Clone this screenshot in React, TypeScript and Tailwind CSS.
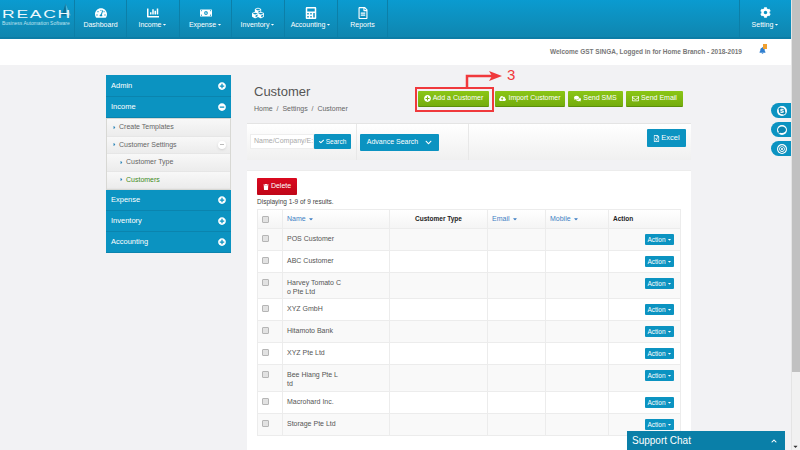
import { Fragment } from "react";
import {
  FaTachometerAlt, FaChartBar, FaMoneyBillAlt, FaCubes, FaCalculator, FaRegFileAlt, FaCog, FaBell,
  FaPlusCircle, FaMinusCircle, FaCloudUploadAlt, FaComments, FaRegEnvelope, FaCheck, FaChevronDown,
  FaRegFileExcel, FaTrash, FaSkype, FaComment, FaBullseye, FaChevronUp, FaCaretDown, FaCaretRight,
} from "react-icons/fa";

const nav = [
  { label: "Dashboard", icon: FaTachometerAlt, w: "w-[52px]" },
  { label: "Income", icon: FaChartBar, caret: true, w: "w-[53px]" },
  { label: "Expense", icon: FaMoneyBillAlt, caret: true, w: "w-[52px]" },
  { label: "Inventory", icon: FaCubes, caret: true, w: "w-[53px]" },
  { label: "Accounting", icon: FaCalculator, caret: true, w: "w-[53px]" },
  { label: "Reports", icon: FaRegFileAlt, w: "w-[50px]" },
];

const rows = [
  { name: ["POS Customer"], h: "h-[22px]" },
  { name: ["ABC Customer"], h: "h-[22px]" },
  { name: ["Harvey Tomato C", "o Pte Ltd"], h: "h-[26px]" },
  { name: ["XYZ GmbH"], h: "h-[22px]" },
  { name: ["Hitamoto Bank"], h: "h-[22px]" },
  { name: ["XYZ Pte Ltd"], h: "h-[22px]" },
  { name: ["Bee Hiang Pte L", "td"], h: "h-[27px]" },
  { name: ["Macrohard Inc."], h: "h-[22px]" },
  { name: ["Storage Pte Ltd"], h: "h-[22px]" },
];

function MenuHead({ label, open }: { label: string; open?: boolean }) {
  return (
    <div className="flex h-[21px] items-center justify-between border-b border-[#0b84ae] bg-[#0b93c1] px-[5px] text-[7.5px] text-white">
      <span>{label}</span>
      {open ? <FaMinusCircle className="text-[8px]" /> : <FaPlusCircle className="text-[8px]" />}
    </div>
  );
}

function SubItem({ label, indent, green, minus }: { label: string; indent?: boolean; green?: boolean; minus?: boolean }) {
  return (
    <div className={`flex h-[17.5px] items-center border-b border-[#e6e6e6] bg-gradient-to-b from-[#f8f8f8] to-[#ececec] text-[7px] ${indent ? "pl-[12px]" : "pl-[5px]"} ${green ? "text-[#3f8a1e]" : "text-[#666]"}`}>
      <FaCaretRight className="mr-[2px] text-[5px] text-[#2f86b8]" />
      <span>{label}</span>
      {minus && (
        <span className="ml-auto mr-[4px] flex h-[8px] w-[8px] items-center justify-center rounded-full bg-white shadow-sm">
          <span className="h-px w-[4px] bg-[#bbb]" />
        </span>
      )}
    </div>
  );
}

function GreenBtn({ icon: Icon, label, w }: { icon: typeof FaCheck; label: string; w: string }) {
  return (
    <button className={`flex h-[16px] ${w} items-center justify-center gap-[2px] rounded-[1px] border-b border-[#5b8f0a] bg-gradient-to-b from-[#8bc616] to-[#74ad0c] text-[7px] text-white`}>
      <Icon className="text-[7px]" />
      {label}
    </button>
  );
}

function SortHead({ label }: { label: string }) {
  return (
    <span className="flex items-center gap-[2px] text-[7px] font-normal text-[#3f7fc4]">
      {label}
      <FaCaretDown className="text-[6px]" />
    </span>
  );
}

function Check() {
  return <span className="block h-[7px] w-[7px] rounded-[1px] border border-[#b5b5b5] bg-[#e2e2e2]" />;
}

export default function App() {
  return (
    <div className="relative flex h-[450px] w-[800px] overflow-hidden bg-[#f2f2f4] font-['Liberation_Sans',Arial,sans-serif]">
      <div className="w-[791px]">
        <header className="flex h-[39px] border-b-2 border-[#0c7da6] bg-gradient-to-b from-[#0a9bd0] to-[#0f86af] text-white">
          <div className="relative w-[75px] border-r border-[#0c7fa8] pl-[2px] pt-[10px]">
            <svg className="absolute left-[59px] top-[3px] h-[13px] w-[13px]" viewBox="0 0 14 13">
              <path d="M7 0 L13 13 L3 13 Z" fill="#0c6f96" />
              <path d="M7 0 L8 13 L13 13 Z" fill="#45b4d8" />
            </svg>
            <div className="relative origin-left scale-x-[1.75] text-[10px] leading-[10px] tracking-[1px] text-[#eef8fc]">REACH</div>
            <div className="whitespace-nowrap text-[5px] leading-[6px] text-[#bfe3f0]">Business Automation Software</div>
          </div>
          {nav.map((n) => (
            <div key={n.label} className={`flex ${n.w} flex-col items-center border-r border-[#0c7fa8] pt-[7px]`}>
              <n.icon className="h-[12px] w-[12px]" />
              <span className="mt-[1px] flex items-center gap-[1px] text-[7px] leading-[9px]">
                {n.label}
                {n.caret && <FaCaretDown className="text-[5px]" />}
              </span>
            </div>
          ))}
          <div className="ml-auto flex w-[52px] flex-col items-center border-l border-[#0c7fa8] pt-[7px]">
            <FaCog className="h-[11px] w-[11px]" />
            <span className="mt-[2px] flex items-center gap-[1px] text-[7px] leading-[9px]">
              Setting
              <FaCaretDown className="text-[5px]" />
            </span>
          </div>
        </header>

        <div className="relative flex h-[26px] items-center justify-end bg-white pr-[49px] text-[6.5px] font-bold text-[#777]">
          <span>Welcome GST SINGA, Logged in for Home Branch - 2018-2019</span>
          <span className="absolute right-[25px] top-[5px]">
            <FaBell className="mt-[3px] text-[7px] text-[#2f7fd0]" />
            <span className="absolute left-[4px] top-0 h-[5px] w-[4px] bg-[#f0a030]" />
          </span>
        </div>

        <div className="flex pl-[106px]">
          <aside className="mt-[10px] h-[178px] w-[125px] self-start border-b border-[#0b84ae] bg-[#0b93c1] pt-px">
            <MenuHead label="Admin" />
            <MenuHead label="Income" open />
            <div className="border border-[#d8d8d4]">
              <SubItem label="Create Templates" />
              <SubItem label="Customer Settings" minus />
              <SubItem label="Customer Type" indent />
              <SubItem label="Customers" indent green />
            </div>
            <MenuHead label="Expense" />
            <MenuHead label="Inventory" />
            <MenuHead label="Accounting" />
          </aside>

          <main className="ml-[16px] w-[444px]">
            <div className="flex h-[58px]">
              <div className="ml-[7px] pt-[19px]">
                <h1 className="text-[13px] leading-[15px] text-[#555]">Customer</h1>
                <p className="mt-[5px] text-[7px] leading-[9px] text-[#666]">Home&nbsp; /&nbsp; Settings&nbsp; /&nbsp; Customer</p>
              </div>
              <div className="ml-auto mr-[8px] mt-[26px] flex gap-[3px]">
                <GreenBtn icon={FaPlusCircle} label="Add a Customer" w="w-[71px] mr-[3px]" />
                <GreenBtn icon={FaCloudUploadAlt} label="Import Customer" w="w-[70px]" />
                <GreenBtn icon={FaComments} label="Send SMS" w="w-[55px]" />
                <GreenBtn icon={FaRegEnvelope} label="Send Email" w="w-[57px]" />
              </div>
            </div>

            <div className="flex h-[37px] border-t border-[#e4e4e4] bg-gradient-to-b from-white to-[#f0f0f0]">
              <div className="flex w-[110px] items-start border-r border-[#e8e8e8] pl-[3px] pt-[10px]">
                <span className="flex h-[15px] w-[64px] items-center overflow-hidden whitespace-nowrap border border-[#eee] bg-white pl-[3px] text-[7px] text-[#aaa]">Name/Company/E:</span>
                <button className="flex h-[15px] w-[37px] items-center justify-center gap-[2px] rounded-[1px] bg-[#0b93c1] text-[6.5px] text-white">
                  <FaCheck className="text-[5px]" />
                  Search
                </button>
              </div>
              <div className="flex w-[112px] items-start border-r border-[#e8e8e8] pl-[3px] pt-[10px]">
                <button className="flex h-[17px] w-[79px] items-center justify-center gap-[7px] rounded-[1px] bg-[#0b93c1] text-[7px] text-white">
                  Advance Search
                  <FaChevronDown className="text-[7px]" />
                </button>
              </div>
              <div className="flex flex-1 justify-end pr-[5px] pt-[5px]">
                <button className="flex h-[18px] w-[39px] items-center justify-center gap-[1px] rounded-[1px] bg-[#0b93c1] text-[7.5px] text-white">
                  <FaRegFileExcel className="text-[7px]" />
                  Excel
                </button>
              </div>
            </div>

            <section className="mt-[10px] h-[280px] border-t border-[#ececec] bg-white px-[10px] pt-[7px]">
              <button className="flex h-[17px] w-[40px] items-center justify-center gap-[2px] rounded-[1px] bg-gradient-to-b from-[#d9091f] to-[#c00618] text-[7px] text-white">
                <FaTrash className="text-[6px]" />
                Delete
              </button>
              <p className="h-[13px] text-[6.5px] leading-[13px] text-[#444]">Displaying 1-9 of 9 results.</p>
              <table className="mt-px w-[423px] table-fixed border-collapse text-left text-[7px] text-[#555]">
                <colgroup>
                  <col className="w-[25px]" />
                  <col className="w-[107px]" />
                  <col className="w-[98px]" />
                  <col className="w-[58px]" />
                  <col className="w-[63px]" />
                  <col className="w-[72px]" />
                </colgroup>
                <thead>
                  <tr className="h-[19px] bg-gradient-to-b from-white to-[#f4f4f4]">
                    <th className="border border-[#ececec] pl-[4px]"><Check /></th>
                    <th className="border border-[#ececec] pl-[4px]"><SortHead label="Name" /></th>
                    <th className="border border-[#ececec] text-center text-[6.5px] text-[#222]">Customer Type</th>
                    <th className="border border-[#ececec] pl-[4px]"><SortHead label="Email" /></th>
                    <th className="border border-[#ececec] pl-[4px]"><SortHead label="Mobile" /></th>
                    <th className="border border-[#ececec] pl-[4px] text-[6.5px] text-[#222]">Action</th>
                  </tr>
                </thead>
                <tbody>
                  {rows.map((r, i) => (
                    <tr key={r.name[0]} className={`${r.h} ${i % 2 === 0 ? "bg-[#f9f9f9]" : "bg-white"}`}>
                      <td className="border border-[#ececec] pl-[4px] pt-[6px] align-top"><Check /></td>
                      <td className="border border-[#ececec] pl-[4px] pt-[5px] align-top leading-[9px]">
                        {r.name.map((line, j) => (
                          <Fragment key={line}>
                            {j > 0 && <br />}
                            {line}
                          </Fragment>
                        ))}
                      </td>
                      <td className="border border-[#ececec]" />
                      <td className="border border-[#ececec]" />
                      <td className="border border-[#ececec]" />
                      <td className="border border-[#ececec] pr-[6px] pt-[5px] align-top">
                        <button className="ml-auto flex h-[11px] w-[29px] items-center justify-center gap-[1px] rounded-[1px] bg-[#0b93c1] text-[6.5px] text-white">
                          Action
                          <FaCaretDown className="text-[5px]" />
                        </button>
                      </td>
                    </tr>
                  ))}
                </tbody>
              </table>
            </section>
          </main>
        </div>
      </div>

      <div className="flex w-[9px] flex-col border-l border-[#e4e4e4] bg-[#f1f1f1]">
        <div className="h-[372px] bg-[#c1c1c1]" />
        <FaCaretDown className="mt-auto text-[7px] text-[#333]" />
      </div>

      {/* annotation over the add button */}
      <div className="absolute left-[415px] top-[87px] h-[25px] w-[79px] border-2 border-[#f0393c]" />
      <svg className="absolute left-[464px] top-[69px] h-[20px] w-[40px]" viewBox="0 0 40 20">
        <path d="M3 20 V7 H28" fill="none" stroke="#f0393c" strokeWidth="2.5" />
        <path d="M25 2 L38 7 L25 12 L28 7 Z" fill="#f0393c" />
      </svg>
      <span className="absolute left-[507px] top-[67px] text-[15px] leading-[16px] text-[#f0393c]">3</span>

      {/* floating side tabs */}
      <div className="absolute left-[771px] top-[103px] flex flex-col gap-[4px]">
        {[FaSkype, FaComment, FaBullseye].map((Icon, i) => (
          <div key={i} className="flex h-[15px] w-[20px] items-center justify-center rounded-l-full bg-[#0b93c1] pl-[2px]">
            <span className="flex h-[10px] w-[10px] items-center justify-center rounded-full bg-white">
              <Icon className="text-[8px] text-[#0b84ae]" />
            </span>
          </div>
        ))}
      </div>

      <div className="absolute bottom-0 left-[627px] flex h-[19px] w-[158px] items-center justify-between bg-[#0a7fa8] pl-[5px] pr-[8px] text-[10px] text-white">
        Support Chat
        <FaChevronUp className="text-[6px]" />
      </div>
    </div>
  );
}
